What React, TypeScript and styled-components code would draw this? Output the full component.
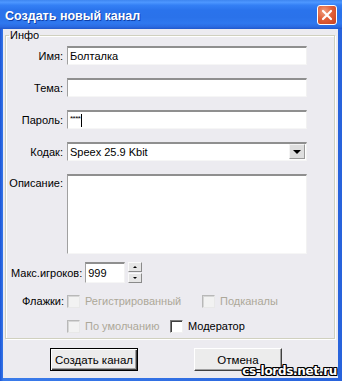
import React from "react";
import styled, { createGlobalStyle } from "styled-components";

const Global = createGlobalStyle`
  html, body { margin: 0; padding: 0; background: #fff; }
  * { box-sizing: border-box; }
`;

const Window = styled.div`
  position: relative;
  width: 342px;
  height: 381px;
  display: flex;
  flex-direction: column;
  background: linear-gradient(to right, #1c56d8 0%, #3a7bea 1%, #2863dc 100%);
  overflow: hidden;
  font-family: "Liberation Sans", Arial, sans-serif;
  font-size: 11px;
  color: #000;
`;

const TitleBar = styled.div`
  height: 29px;
  flex: none;
  display: flex;
  align-items: center;
  justify-content: space-between;
  padding: 0 5px 0 5px;
  background: linear-gradient(
    to bottom,
    #3e86f0 0%,
    #4d97ff 8%,
    #3480f5 18%,
    #2a73ec 35%,
    #2a72ea 60%,
    #2f78ef 80%,
    #2b6be2 92%,
    #2158cc 100%
  );
`;

const Title = styled.span`
  color: #fff;
  font-family: "Liberation Sans", Arial, sans-serif;
  font-weight: bold;
  font-size: 12.5px;
  text-shadow: 1px 1px 0 #0f3fa8;
  margin-top: 2px;
`;

const CloseButton = styled.div`
  width: 20px;
  height: 20px;
  margin-top: 1px;
  border: 1px solid #fff;
  border-radius: 3px;
  background: radial-gradient(circle at 35% 30%, #f0a080 0%, #e0603a 45%, #c8401e 100%);
  display: flex;
  align-items: center;
  justify-content: center;
`;

const Body = styled.div`
  flex: 1;
  margin: 0 4px 3px 3px;
  background: #ecebf0;
  display: flex;
  flex-direction: column;
  padding: 0 3px 0 2px;
`;

const Group = styled.fieldset`
  margin: 0;
  padding: 4px 0 0 0;
  height: 310px;
  border: 1px solid #d0d0bf;
  box-shadow: inset 1px 1px 0 #fff, 1px 1px 0 #fff;
  display: flex;
  flex-direction: column;
`;

const Legend = styled.legend`
  padding: 0 1px;
  margin-left: 3px;
  line-height: 13px;
  font-size: 11px;
`;

const Form = styled.div`
  display: grid;
  grid-template-columns: 57px 240px;
  column-gap: 4px;
  row-gap: 13px;
  align-items: center;
`;

const Label = styled.label<{ $top?: boolean }>`
  text-align: right;
  white-space: nowrap;
  align-self: ${(p) => (p.$top ? "start" : "center")};
  padding-top: ${(p) => (p.$top ? "3px" : "0")};
`;

const Field = styled.div<{ $h?: number; $w?: number }>`
  height: ${(p) => p.$h ?? 19}px;
  width: ${(p) => (p.$w ? `${p.$w}px` : "auto")};
  background: #fff;
  border-style: solid;
  border-width: 2px 1px 1px 1px;
  border-color: #8f8f8f #f2f2f2 #f6f6f6 #a0a0a0;
  display: flex;
  align-items: center;
  padding-left: 2px;
  position: relative;
  font-size: 11px;
  white-space: nowrap;
`;

const Secret = styled.span`
  font-size: 8px;
  letter-spacing: -0.5px;
  margin-top: -3px;
`;

const Caret = styled.span`
  display: inline-block;
  width: 1px;
  height: 13px;
  background: #000;
  margin-left: 1px;
`;

const DropButton = styled.div`
  position: absolute;
  right: 1px;
  top: 0;
  width: 16px;
  height: 15px;
  background: #dedede;
  border: 1px solid;
  border-color: #f4f4f4 #9a9a9a #9a9a9a #f4f4f4;
  display: flex;
  align-items: center;
  justify-content: center;
`;

const Arrow = styled.span<{ $up?: boolean; $s?: number }>`
  width: 0;
  height: 0;
  border-left: ${(p) => p.$s ?? 3.5}px solid transparent;
  border-right: ${(p) => p.$s ?? 3.5}px solid transparent;
  ${(p) =>
    p.$up
      ? `border-bottom: ${p.$s ?? 3.5}px solid #000;`
      : `border-top: ${p.$s ?? 3.5}px solid #000;`}
`;

const MaxRow = styled.div`
  display: flex;
  align-items: center;
  margin-top: 8px;
  padding-left: 5px;
`;

const MaxLabel = styled.span`
  margin-right: 3px;
`;

const Spin = styled.div`
  display: flex;
  flex-direction: column;
  gap: 1px;
  margin-left: 3px;
`;

const SpinButton = styled.div`
  width: 14px;
  height: 10px;
  background: #e6e6e6;
  border: 1px solid;
  border-color: #fafafa #8a8a8a #8a8a8a #fafafa;
  display: flex;
  align-items: center;
  justify-content: center;
`;

const FlagRow = styled.div<{ $mt: number }>`
  display: flex;
  align-items: center;
  margin-top: ${(p) => p.$mt}px;
  height: 14px;
`;

const FlagLabel = styled.span`
  width: 58px;
  text-align: right;
  margin-right: 3px;
`;

const FlagSpacer = styled.span`
  width: 61px;
`;

const CheckItem = styled.label<{ $w?: number; $off?: boolean }>`
  display: flex;
  align-items: center;
  gap: 5px;
  width: ${(p) => (p.$w ? `${p.$w}px` : "auto")};
  color: ${(p) => (p.$off ? "#aca899" : "#000")};
  white-space: nowrap;
`;

const Box = styled.span<{ $off?: boolean }>`
  width: 13px;
  height: 13px;
  flex: none;
  background: ${(p) => (p.$off ? "#f2f2f2" : "#fff")};
  border: 1px solid;
  border-color: ${(p) =>
    p.$off ? "#b8b8b8 #e8e8e8 #e8e8e8 #b8b8b8" : "#7a7a7a #f0f0f0 #f0f0f0 #7a7a7a"};
  box-shadow: ${(p) => (p.$off ? "inset 1px 1px 0 #d6d6d6" : "inset 1px 1px 0 #404040")};
`;

const ButtonRow = styled.div`
  display: flex;
  gap: 56px;
  margin-top: 9px;
  padding-left: 45px;
`;

const Button = styled.div<{ $default?: boolean }>`
  width: 88px;
  height: 23px;
  display: flex;
  align-items: center;
  justify-content: center;
  background: #ececec;
  border: 1px solid;
  border-color: ${(p) => (p.$default ? "#000" : "#fff #404040 #404040 #fff")};
  box-shadow: ${(p) =>
    p.$default
      ? "inset 1px 1px 0 #fff, inset -1px -1px 0 #404040, inset -2px -2px 0 #a0a0a0"
      : "inset -1px -1px 0 #a0a0a0"};
  font-size: 11.5px;
`;

const Watermark = styled.span`
  position: absolute;
  right: 5px;
  bottom: 3px;
  font-family: "DejaVu Sans", Verdana, sans-serif;
  font-weight: bold;
  font-size: 12px;
  line-height: 13px;
  color: #fff;
  letter-spacing: -0.3px;
  text-shadow: 1px 0 0 #000, -1px 0 0 #000, 0 1px 0 #000, 0 -1px 0 #000,
    1px 1px 0 #000, -1px -1px 0 #000, 1px -1px 0 #000, -1px 1px 0 #000;
`;

export default function App() {
  return (
    <>
      <Global />
      <Window>
        <TitleBar>
          <Title>Создать новый канал</Title>
          <CloseButton>
            <svg width="12" height="12" viewBox="0 0 12 12">
              <path d="M2 2 L10 10 M10 2 L2 10" stroke="#fff" strokeWidth="2.2" strokeLinecap="round" />
            </svg>
          </CloseButton>
        </TitleBar>
        <Body>
          <Group>
            <Legend>Инфо</Legend>
            <Form>
              <Label>Имя:</Label>
              <Field>Болталка</Field>
              <Label>Тема:</Label>
              <Field />
              <Label>Пароль:</Label>
              <Field>
                <Secret>****</Secret>
                <Caret />
              </Field>
              <Label>Кодак:</Label>
              <Field>
                Speex 25.9 Kbit
                <DropButton>
                  <Arrow $s={4} />
                </DropButton>
              </Field>
              <Label $top>Описание:</Label>
              <Field $h={80} />
            </Form>
            <MaxRow>
              <MaxLabel>Макс.игроков:</MaxLabel>
              <Field $h={21} $w={40}>999</Field>
              <Spin>
                <SpinButton>
                  <Arrow $up $s={2} />
                </SpinButton>
                <SpinButton>
                  <Arrow $s={2} />
                </SpinButton>
              </Spin>
            </MaxRow>
            <FlagRow $mt={11}>
              <FlagLabel>Флажки:</FlagLabel>
              <CheckItem $w={135} $off>
                <Box $off />
                Регистрированный
              </CheckItem>
              <CheckItem $off>
                <Box $off />
                Подканалы
              </CheckItem>
            </FlagRow>
            <FlagRow $mt={11}>
              <FlagSpacer />
              <CheckItem $w={103} $off>
                <Box $off />
                По умолчанию
              </CheckItem>
              <CheckItem>
                <Box />
                Модератор
              </CheckItem>
            </FlagRow>
          </Group>
          <ButtonRow>
            <Button $default>Создать канал</Button>
            <Button>Отмена</Button>
          </ButtonRow>
        </Body>
        <Watermark>cs-lords.net.ru</Watermark>
      </Window>
    </>
  );
}
